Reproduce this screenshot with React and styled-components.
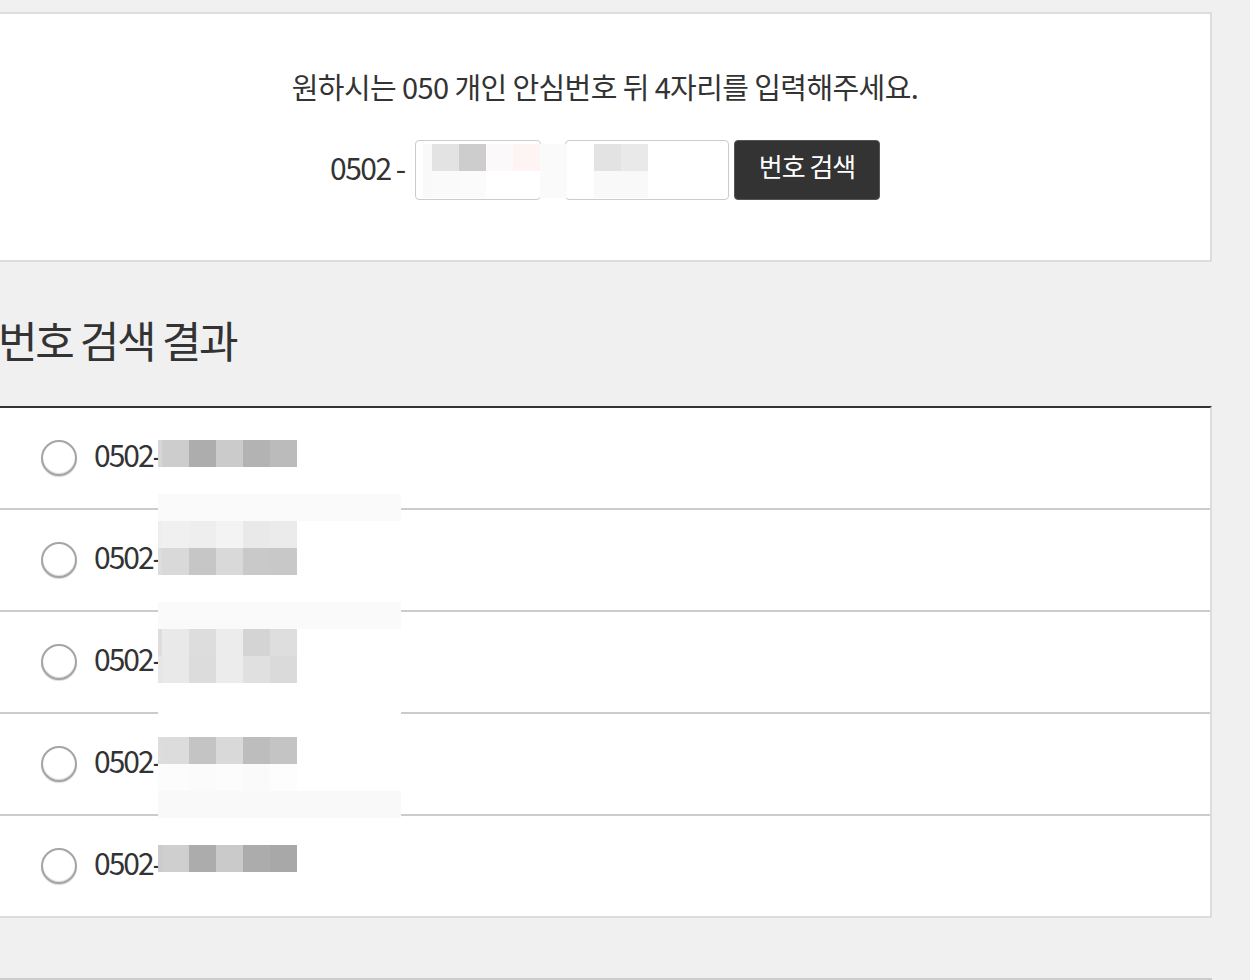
import React from "react";
import styled, { createGlobalStyle } from "styled-components";

const GlobalStyle = createGlobalStyle`
  html, body { margin: 0; padding: 0; }
  body {
    background: #f0f0f0;
    font-family: "Noto Sans CJK KR", "Noto Sans", sans-serif;
    color: #333;
  }
`;

const Page = styled.div`
  width: 1214px;
  margin-left: -2px;
  padding-top: 12px;
`;

const Card = styled.section`
  box-sizing: border-box;
  height: 250px;
  background: #fff;
  border: 2px solid #ddd;
  padding-top: 52px;
  display: flex;
  flex-direction: column;
  align-items: center;
`;

const Guide = styled.p`
  margin: 0;
  font-size: 29px;
  line-height: 40px;
  letter-spacing: -0.6px;
  color: #333;
`;

const SearchRow = styled.div`
  position: relative;
  margin-top: 34px;
  display: flex;
  align-items: center;
  height: 60px;
`;

const Prefix = styled.span`
  font-size: 30px;
  letter-spacing: -1.5px;
  width: 75px;
  margin-right: 10px;
  padding-bottom: 6px;
  white-space: nowrap;
`;

const NumInput = styled.div`
  box-sizing: border-box;
  width: ${(p) => p.$w}px;
  height: 60px;
  border: 1px solid #ccc;
  border-radius: 4px;
  background: #fff;
  margin-right: ${(p) => p.$mr}px;
`;

const SearchButton = styled.button`
  box-sizing: border-box;
  width: 146px;
  height: 60px;
  border: 1px solid #555;
  border-radius: 4px;
  background: #333;
  color: #fff;
  font-family: inherit;
  font-size: 26px;
  letter-spacing: -1px;
  padding: 0 0 10px;
`;

const Heading = styled.h2`
  margin: 47px 0 37px;
  font-size: 43px;
  line-height: 60px;
  font-weight: 400;
  letter-spacing: -2.3px;
  color: #333;
`;

const List = styled.ul`
  position: relative;
  list-style: none;
  margin: 0;
  padding: 0;
  background: #fff;
  border-top: 2px solid #333;
  border-right: 2px solid #ddd;
  border-bottom: 2px solid #ddd;
`;

const Row = styled.li`
  height: 100px;
  display: flex;
  align-items: center;
  padding-left: 43px;
  border-bottom: ${(p) => (p.$last ? "none" : "2px solid #ccc")};
`;

const Radio = styled.span`
  box-sizing: border-box;
  width: 36px;
  height: 36px;
  border-radius: 50%;
  border: 2px solid #a5a5a5;
  box-shadow: inset 0 -1px 1px rgba(0, 0, 0, 0.15), 0 1px 1px rgba(0, 0, 0, 0.15);
  background: #fff;
  margin-right: 17px;
  flex: none;
`;

const Number = styled.span`
  font-size: 30px;
  letter-spacing: -2px;
  color: #333;
  padding-bottom: 8px;
`;

const MosaicGrid = styled.div`
  position: absolute;
  left: ${(p) => p.$x}px;
  top: ${(p) => p.$y}px;
  display: grid;
  grid-template-columns: ${(p) => p.$cols};
  grid-auto-rows: ${(p) => p.$h}px;
  pointer-events: none;
`;

const Cell = styled.span`
  background: ${(p) => p.$c || "transparent"};
`;

const Footer = styled.div`
  margin-top: 60px;
  border-top: 2px solid #ccc;
  height: 0;
`;

function Mosaic({ x, y, cols, h, rows }) {
  return (
    <MosaicGrid $x={x} $y={y} $cols={cols.map((c) => c + "px").join(" ")} $h={h}>
      {rows.flatMap((r, i) => r.map((c, j) => <Cell key={i + "-" + j} $c={c} />))}
    </MosaicGrid>
  );
}

const T = null;
const W = "#fff";
const all = (c) => Array(10).fill(c);

const listRows = [
  ["#d6d6d6", "#cdcdcd", "#adadad", "#cbcbcb", "#b3b3b3", "#bbbbbb", T, T, T, T],
  all(T),
  all("#fafafa"),
  ["#eeeeee", "#f0f0f0", "#eeeeee", "#f3f3f3", "#e9e9e9", "#ebebeb", T, T, T, T],
  ["#dddddd", "#d9d9d9", "#c6c6c6", "#d9d9d9", "#c9c9c9", "#c8c8c8", T, T, T, T],
  all(T),
  all("#fafafa"),
  ["#dddddd", "#e9e9e9", "#dddddd", "#ececec", "#d4d4d4", "#dedede", W, W, W, W],
  ["#e6e6e6", "#e9e9e9", "#dcdcdc", "#ececec", "#e0e0e0", "#dadada", W, W, W, W],
  all(W),
  all(W),
  ["#dddddd", "#dcdcdc", "#c4c4c4", "#d9d9d9", "#bdbdbd", "#c4c4c4", T, T, T, T],
  ["#fcfcfc", "#fcfcfc", "#fbfbfb", "#fcfcfc", "#fafafa", "#fdfdfd", W, W, W, W],
  all("#f9f9f9"),
  all(T),
  ["#cccccc", "#cfcfcf", "#acacac", "#cacaca", "#acacac", "#a8a8a8", T, T, T, T],
];

const inputRows = [
  ["#f9f9f9", "#e3e3e3", "#cdcdcd", "#fbf9fa", "#fff4f4", "#fafafa", T, "#e3e3e3", "#e9e9e9"],
  ["#f9f9f9", "#fafafa", "#fbfbfb", T, T, "#fafafa", T, "#f9f9f9", "#f9f9f9"],
];

export default function App() {
  return (
    <>
      <GlobalStyle />
      <Page>
        <Card>
          <Guide>원하시는 050 개인 안심번호 뒤 4자리를 입력해주세요.</Guide>
          <SearchRow>
            <Prefix>0502 -</Prefix>
            <NumInput $w={126} $mr={24} />
            <NumInput $w={164} $mr={5} />
            <SearchButton type="button">번호 검색</SearchButton>
            <Mosaic x={93} y={4} h={27} cols={[9, 27, 27, 27, 27, 27, 27, 27, 27]} rows={inputRows} />
          </SearchRow>
        </Card>
        <Heading>번호 검색 결과</Heading>
        <List>
          {[0, 1, 2, 3, 4].map((i) => (
            <Row key={i} $last={i === 4}>
              <Radio />
              <Number>0502-</Number>
            </Row>
          ))}
          <Mosaic
            x={160}
            y={32}
            h={27}
            cols={[4, 27, 27, 27, 27, 27, 26, 26, 26, 26]}
            rows={listRows}
          />
        </List>
        <Footer />
      </Page>
    </>
  );
}
